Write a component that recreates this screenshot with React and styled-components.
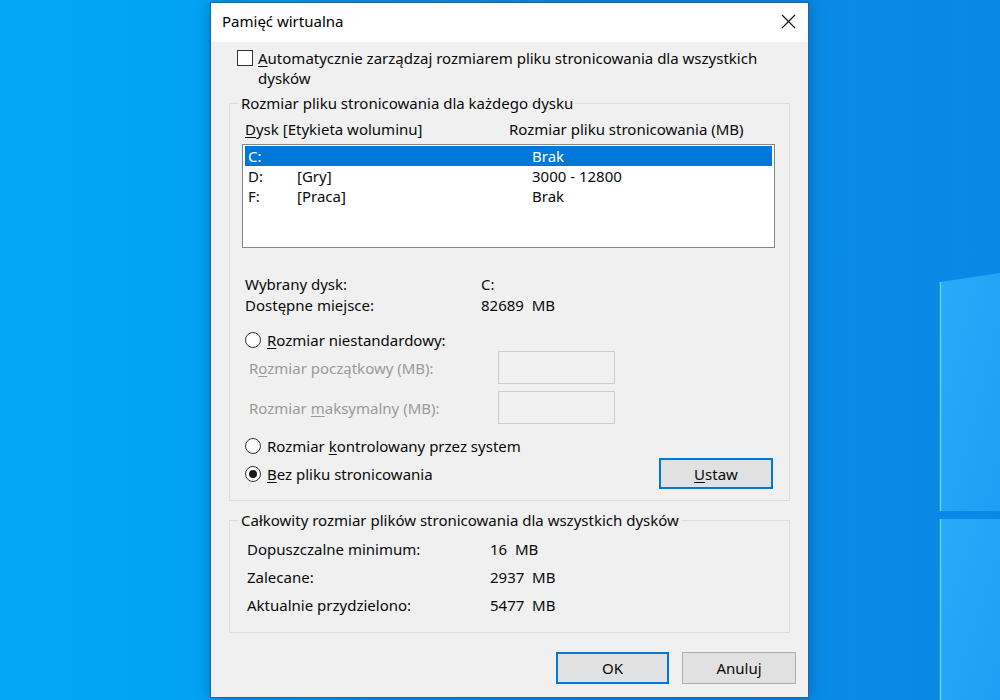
import React from 'react';
import styled, { createGlobalStyle } from 'styled-components';

const GlobalStyle = createGlobalStyle`
  html, body {
    margin: 0;
    padding: 0;
  }
  body {
    width: 1000px;
    height: 700px;
    overflow: hidden;
    font-family: "Noto Sans", "Open Sans", sans-serif;
    font-size: 15px;
    color: #0a0a0a;
  }
`;

const drives = [
  { letter: 'C:', label: '', size: 'Brak', selected: true },
  { letter: 'D:', label: '[Gry]', size: '3000 - 12800' },
  { letter: 'F:', label: '[Praca]', size: 'Brak' },
];

const totals = [
  { label: 'Dopuszczalne minimum:', value: '16  MB' },
  { label: 'Zalecane:', value: '2937  MB' },
  { label: 'Aktualnie przydzielono:', value: '5477  MB' },
];

const App = () => (
  <Desktop>
    <GlobalStyle />
    <Logo width="70" height="440" viewBox="0 0 70 440">
      <defs>
        <linearGradient id="pane" x1="0" y1="0" x2="1" y2="1">
          <stop offset="0" stopColor="#2aaaf9" />
          <stop offset="1" stopColor="#1d9ff5" />
        </linearGradient>
      </defs>
      <polygon points="10,22 70,13 70,251 10,251" fill="url(#pane)" />
      <polygon points="10,259 70,259 70,440 10,440" fill="url(#pane)" />
      <line x1="10.5" y1="22" x2="10.5" y2="251" stroke="#5fd3ff" strokeWidth="1.5" />
      <line x1="10.5" y1="259" x2="10.5" y2="440" stroke="#5fd3ff" strokeWidth="1.5" />
    </Logo>

    <Window>
      <TitleBar>
        <Title>Pamięć wirtualna</Title>
        <CloseButton>
          <svg width="15" height="15" viewBox="0 0 15 15">
            <path d="M1 1 L14 14 M14 1 L1 14" stroke="#111" strokeWidth="1.1" fill="none" />
          </svg>
        </CloseButton>
      </TitleBar>

      <Body>
        <CheckRow>
          <CheckBox />
          <Text>
            <U>A</U>utomatycznie zarządzaj rozmiarem pliku stronicowania dla wszystkich
            <br />
            dysków
          </Text>
        </CheckRow>

        <GroupBox>
          <Legend>Rozmiar pliku stronicowania dla każdego dysku</Legend>
          <HeaderRow>
            <span><U>D</U>ysk [Etykieta woluminu]</span>
            <span>Rozmiar pliku stronicowania (MB)</span>
          </HeaderRow>
          <ListBox>
            {drives.map((d) => (
              <DriveRow key={d.letter} selected={d.selected}>
                <span>{d.letter}</span>
                <span>{d.label}</span>
                <span>{d.size}</span>
              </DriveRow>
            ))}
          </ListBox>

          <InfoRow top={26}>
            <span>Wybrany dysk:</span>
            <span>C:</span>
          </InfoRow>
          <InfoRow top={1}>
            <span>Dostępne miejsce:</span>
            <span>82689  MB</span>
          </InfoRow>

          <RadioRow top={15}>
            <Radio />
            <span><U>R</U>ozmiar niestandardowy:</span>
          </RadioRow>
          <FieldRow top={1}>
            <span>R<U>o</U>zmiar początkowy (MB):</span>
            <Field />
          </FieldRow>
          <FieldRow top={7}>
            <span>Rozmiar <U>m</U>aksymalny (MB):</span>
            <Field />
          </FieldRow>
          <RadioRow top={12}>
            <Radio />
            <span>Rozmiar <U>k</U>ontrolowany przez system</span>
          </RadioRow>
          <LastRow>
            <RadioRow top={0}>
              <Radio checked />
              <span><U>B</U>ez pliku stronicowania</span>
            </RadioRow>
            <SetButton><U>U</U>staw</SetButton>
          </LastRow>
        </GroupBox>

        <TotalsBox>
          <Legend>Całkowity rozmiar plików stronicowania dla wszystkich dysków</Legend>
          {totals.map((t) => (
            <TotalRow key={t.label}>
              <span>{t.label}</span>
              <span>{t.value}</span>
            </TotalRow>
          ))}
        </TotalsBox>

        <ButtonBar>
          <DialogButton primary>OK</DialogButton>
          <DialogButton>Anuluj</DialogButton>
        </ButtonBar>
      </Body>
    </Window>
  </Desktop>
);

const Desktop = styled.div`
  position: relative;
  width: 1000px;
  height: 700px;
  overflow: hidden;
  background: linear-gradient(to right, #03a6f5 0%, #03a2f3 20%, #068fe9 60%, #0a88e5 100%);
`;

const Logo = styled.svg`
  position: absolute;
  left: 930px;
  top: 260px;
`;

const Window = styled.div`
  position: absolute;
  left: 210px;
  top: 2px;
  width: 599px;
  height: 696px;
  box-sizing: border-box;
  border: 1px solid #1f63a8;
  background: #f0f0f0;
  box-shadow: 0 0 14px rgba(0, 40, 90, 0.35);
  display: flex;
  flex-direction: column;
`;

const TitleBar = styled.div`
  height: 39px;
  background: #fff;
  display: flex;
  align-items: center;
  justify-content: space-between;
  padding: 0 0 3px 11px;
  box-sizing: border-box;
`;

const Title = styled.span`
  font-size: 15px;
  color: #000;
`;

const CloseButton = styled.div`
  width: 40px;
  height: 36px;
  display: flex;
  align-items: center;
  justify-content: center;
`;

const Body = styled.div`
  display: flex;
  flex-direction: column;
  padding-top: 6px;
`;

const U = styled.span`
  text-decoration: underline;
  text-underline-offset: 2px;
`;

const Text = styled.div`
  line-height: 20px;
`;

const CheckRow = styled.div`
  display: flex;
  align-items: flex-start;
  gap: 5px;
  margin-left: 26px;
`;

const CheckBox = styled.div`
  width: 16px;
  height: 16px;
  box-sizing: border-box;
  border: 1px solid #333;
  background: #fff;
  margin-top: 2px;
  flex-shrink: 0;
`;

const GroupBox = styled.div`
  position: relative;
  margin: 15px 18px 0;
  border: 1px solid #dcdcdc;
  padding: 15px 14px 11px 12px;
  display: flex;
  flex-direction: column;
`;

const TotalsBox = styled(GroupBox)`
  margin-top: 19px;
  padding: 18px 14px 17px 17px;
  gap: 8px;
`;

const Legend = styled.span`
  position: absolute;
  left: 9px;
  top: -11px;
  padding: 0 2px;
  background: #f0f0f0;
  line-height: 20px;
`;

const HeaderRow = styled.div`
  display: grid;
  grid-template-columns: 264px 1fr;
  margin-left: 3px;
  line-height: 20px;
`;

const ListBox = styled.div`
  margin-top: 5px;
  height: 104px;
  box-sizing: border-box;
  border: 1px solid #828790;
  background: #fff;
  padding: 1px 2px;
`;

const DriveRow = styled.div`
  display: grid;
  grid-template-columns: 49px 235px 1fr;
  height: 20px;
  line-height: 20px;
  padding-left: 3px;
  background: ${(p) => (p.selected ? '#0078d7' : 'transparent')};
  color: ${(p) => (p.selected ? '#fff' : '#0a0a0a')};
`;

const InfoRow = styled.div`
  display: grid;
  grid-template-columns: 236px 1fr;
  margin: ${(p) => p.top}px 0 0 3px;
  line-height: 20px;
  white-space: pre;
`;

const RadioRow = styled.div`
  display: flex;
  align-items: center;
  gap: 6px;
  margin: ${(p) => p.top}px 0 0 3px;
  line-height: 20px;
`;

const Radio = styled.div`
  position: relative;
  width: 16px;
  height: 16px;
  box-sizing: border-box;
  border: 1px solid #333;
  border-radius: 50%;
  background: #fff;
  flex-shrink: 0;
  &::after {
    content: '';
    display: ${(p) => (p.checked ? 'block' : 'none')};
    position: absolute;
    left: 3px;
    top: 3px;
    width: 8px;
    height: 8px;
    border-radius: 50%;
    background: #1a1a1a;
  }
`;

const FieldRow = styled.div`
  display: grid;
  grid-template-columns: 249px 117px;
  align-items: center;
  margin: ${(p) => p.top}px 0 0 7px;
  color: #9a9a9a;
  line-height: 20px;
`;

const Field = styled.div`
  height: 33px;
  box-sizing: border-box;
  border: 1px solid #cccccc;
  background: #f0f0f0;
`;

const LastRow = styled.div`
  display: flex;
  align-items: center;
  justify-content: space-between;
  margin-top: 2px;
  height: 31px;
`;

const SetButton = styled.div`
  width: 114px;
  height: 31px;
  box-sizing: border-box;
  margin-right: 2px;
  border: 2px solid #0078d7;
  background: #e1e1e1;
  display: flex;
  align-items: center;
  justify-content: center;
`;

const TotalRow = styled.div`
  display: grid;
  grid-template-columns: 243px 1fr;
  line-height: 20px;
  white-space: pre;
`;

const ButtonBar = styled.div`
  display: flex;
  justify-content: flex-end;
  gap: 13px;
  margin-top: 19px;
  padding-right: 12px;
`;

const DialogButton = styled.div`
  width: ${(p) => (p.primary ? 113 : 114)}px;
  height: 32px;
  box-sizing: border-box;
  border: ${(p) => (p.primary ? '2px solid #0078d7' : '1px solid #adadad')};
  background: #e1e1e1;
  display: flex;
  align-items: center;
  justify-content: center;
`;

export default App;
